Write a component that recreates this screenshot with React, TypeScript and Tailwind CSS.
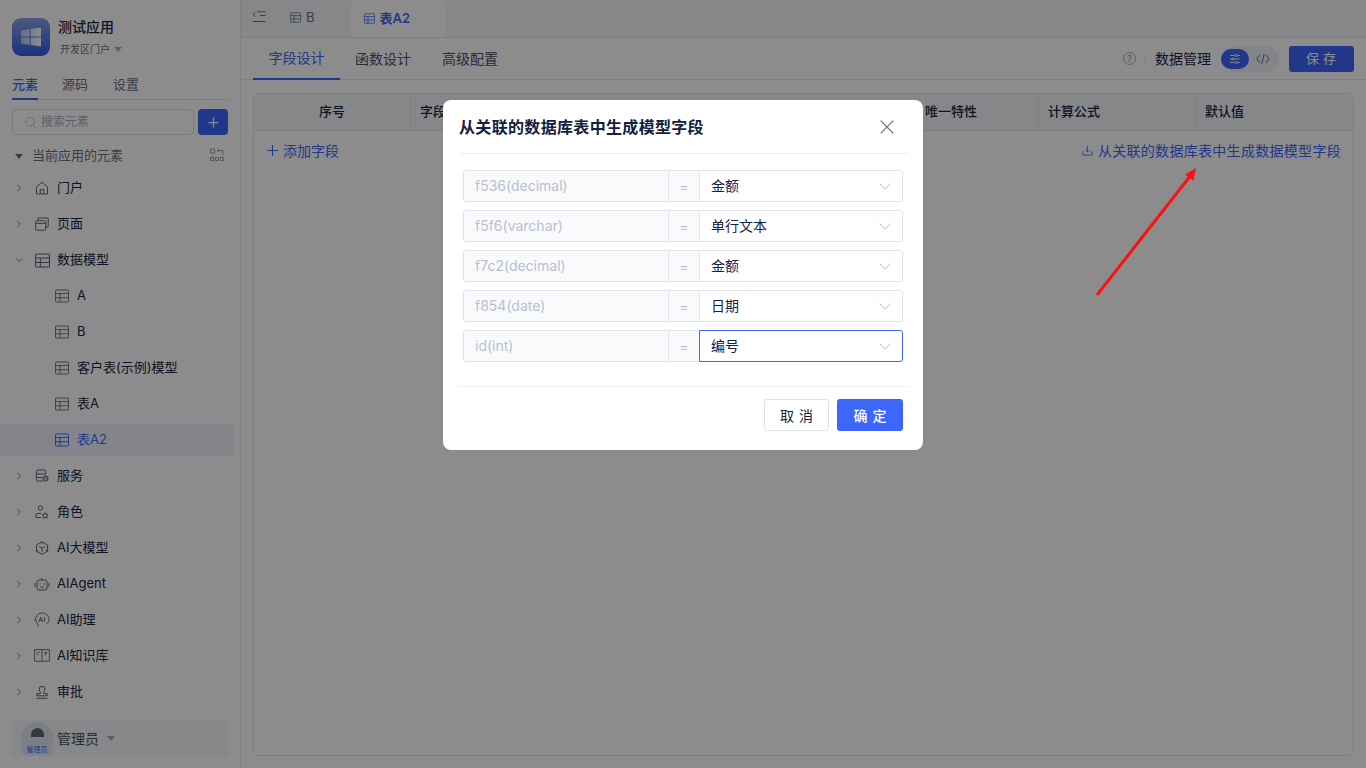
import { ChevronDown, ChevronRight, Plus, Search } from "lucide-react";
import type { ReactNode } from "react";

const FONT = "font-['Inter','Noto_Sans_CJK_SC',sans-serif]";

function TableIcon({ className = "size-[14px]" }: { className?: string }) {
  return (
    <svg viewBox="0 0 14 14" fill="none" stroke="currentColor" strokeWidth="1" className={className}>
      <rect x="0.5" y="1" width="13" height="12" rx="1" />
      <path d="M0.5 4.6H13.5M0.5 8.8H13.5M5 4.6V13" />
    </svg>
  );
}

function HomeIcon() {
  return (
    <svg viewBox="0 0 14 14" fill="none" stroke="currentColor" className="size-[14px]">
      <path d="M1.5 5.8 7 1.2l5.5 4.6v7.2h-11zM5.2 13V8.6h3.6V13" />
    </svg>
  );
}

function PageIcon() {
  return (
    <svg viewBox="0 0 14 14" fill="none" stroke="currentColor" className="size-[14px]">
      <rect x="0.7" y="3.7" width="10" height="9.5" rx="1" />
      <path d="M0.7 6.4h10M3.2 3.5V1h10v9h-2.4" />
    </svg>
  );
}

function ServiceIcon() {
  return (
    <svg viewBox="0 0 14 14" fill="none" stroke="currentColor" className="size-[14px]">
      <path d="M8 12H3a1.6 1.6 0 0 1-1.6-1.6V2.6A1.6 1.6 0 0 1 3 1h6a1.6 1.6 0 0 1 1.6 1.6V5M1.4 5h9M1.4 8.5H7" />
      <circle cx="10.5" cy="9.5" r="2.6" fill="currentColor" fillOpacity="0.4" />
    </svg>
  );
}

function RoleIcon() {
  return (
    <svg viewBox="0 0 14 14" fill="none" stroke="currentColor" className="size-[14px]">
      <circle cx="5.4" cy="3.2" r="2.2" />
      <path d="M1 12.5V10.4a2 2 0 0 1 2-2h3.4M1 12.5h5M10.2 7.6l1 1.9 2 .3-1.5 1.4.4 2-1.9-1-1.9 1 .4-2-1.5-1.4 2-.3z" />
    </svg>
  );
}

function CubeIcon() {
  return (
    <svg viewBox="0 0 14 14" fill="none" stroke="currentColor" className="size-[14px]">
      <path d="M7 .8 12.6 4v6.2L7 13.3 1.4 10.2V4zM4 5.4 7 7.1l3-1.7M7 7.1v3.6M7 .8v2M1.4 10.2l1.8-1M12.6 10.2l-1.8-1" />
    </svg>
  );
}

function RobotIcon() {
  return (
    <svg viewBox="0 0 16 14" fill="none" stroke="currentColor" className="h-[14px] w-4">
      <rect x="3" y="3" width="10" height="10" rx="2" />
      <path d="M8 3V1M1 6v4M15 6v4M6 6.3v1.4M10 6.3v1.4M6 10h4" />
    </svg>
  );
}

function AssistantIcon() {
  return (
    <svg viewBox="0 0 16 16" fill="none" stroke="currentColor" strokeWidth="0.9" className="size-4">
      <path d="M4 14.6v-2.2C2.8 11.6 2 10 2 8l-1.2 0L2.4 5C3 2.6 5.2 1 8 1c3.8 0 7 2.6 7 6.4 0 2-1 3.6-2.6 4.8" />
      <path d="M5 10 6.8 5 8.6 10M5.6 8.4h2.4M10.4 5v5" />
    </svg>
  );
}

function BookIcon() {
  return (
    <svg viewBox="0 0 16 14" fill="none" stroke="currentColor" strokeWidth="0.9" className="h-[14px] w-4">
      <path d="M.6.6h14.8v11.6H9L8 13.2l-1-1H.6zM8 .6v11.6M2.6 3.4h3M2.6 5.6h1.6M10.2 3.4h3M11.6 3.4v3" />
    </svg>
  );
}

function StampIcon() {
  return (
    <svg viewBox="0 0 14 14" fill="none" stroke="currentColor" className="size-[14px]">
      <path d="M1.5 13.3h11M1.8 10.8V8.6h3.6V7.4C4.6 6.6 4.2 5.6 4.2 4.3A2.8 2.8 0 0 1 7 1.4a2.8 2.8 0 0 1 2.8 2.9c0 1.3-.4 2.3-1.2 3.1v1.2h3.6v2.2z" />
    </svg>
  );
}

function Caret({ className }: { className: string }) {
  return <span className={`inline-block border-x-[4.5px] border-t-[5px] border-x-transparent ${className}`} />;
}

function SelectArrow() {
  return (
    <svg viewBox="0 0 12 7" fill="none" stroke="#b9c0d0" className="h-[7px] w-[12px]">
      <path d="M.6.6 6 6.2 11.4.6" />
    </svg>
  );
}

type TreeRow = { label: string; icon: ReactNode; open?: boolean };

const topRows: TreeRow[] = [
  { label: "门户", icon: <HomeIcon /> },
  { label: "页面", icon: <PageIcon /> },
  { label: "数据模型", icon: <TableIcon className="size-[15px]" />, open: true },
];

const bottomRows: TreeRow[] = [
  { label: "服务", icon: <ServiceIcon /> },
  { label: "角色", icon: <RoleIcon /> },
  { label: "AI大模型", icon: <CubeIcon /> },
  { label: "AIAgent", icon: <RobotIcon /> },
  { label: "AI助理", icon: <AssistantIcon /> },
  { label: "AI知识库", icon: <BookIcon /> },
  { label: "审批", icon: <StampIcon /> },
];

const models = ["A", "B", "客户表(示例)模型", "表A", "表A2"];

const fieldRows = [
  { field: "f536(decimal)", value: "金额" },
  { field: "f5f6(varchar)", value: "单行文本" },
  { field: "f7c2(decimal)", value: "金额" },
  { field: "f854(date)", value: "日期" },
  { field: "id(int)", value: "编号", active: true },
];

function Row({ row }: { row: TreeRow }) {
  return (
    <div className="flex h-9 items-center pl-[13px] text-[13px] text-[#1a2542]">
      {row.open ? (
        <ChevronDown size={12} className="shrink-0 text-[#7f8696]" />
      ) : (
        <ChevronRight size={12} className="shrink-0 text-[#7f8696]" />
      )}
      <span className="ml-[6px] flex w-[22px] shrink-0 justify-center text-[#5c6579]">{row.icon}</span>
      <span className="ml-[4px]">{row.label}</span>
    </div>
  );
}

function Sidebar() {
  return (
    <aside className="flex w-[241px] shrink-0 flex-col border-r border-[#e6e8ee] bg-white">
      <div className="flex items-center px-3 pt-[18px]">
        <div className="flex size-[38px] items-center justify-center rounded-[9px] bg-gradient-to-b from-[#8ba2e6] to-[#3059e6]">
          <svg viewBox="0 0 20 20" className="size-[20px]">
            <defs>
              <linearGradient id="winFill" x1="0" x2="1" y1="0" y2="0">
                <stop offset="0" stopColor="#ffffff" stopOpacity="0.55" />
                <stop offset="1" stopColor="#ffffff" />
              </linearGradient>
            </defs>
            <path
              fill="url(#winFill)"
              d="M0 3.4 8.6 2.2v7.2H0zM9.6 2 20 .5v8.9H9.6zM0 10.4h8.6v7.4L0 16.6zM9.6 10.4H20v9.1L9.6 18z"
            />
          </svg>
        </div>
        <div className="ml-[8px]">
          <div className="text-[14px] leading-[17px] font-medium text-[#1a2542]">测试应用</div>
          <div className="mt-[7px] ml-[2px] flex items-center gap-[4px] text-[10px] leading-[14px] text-[#667085]">
            开发区门户
            <Caret className="border-t-[#a8aebb]" />
          </div>
        </div>
      </div>

      <div className="mx-3 mt-[18px] flex h-[26px] gap-[24px] border-b border-[#e6e8ee] text-[13px] leading-[20px] text-[#667085]">
        <span className="h-[26px] border-b-2 border-[#3d66fb] font-medium text-[#3d66fb]">元素</span>
        <span>源码</span>
        <span className="ml-[1px]">设置</span>
      </div>

      <div className="mx-3 mt-[9px] flex gap-[4px]">
        <div className="flex h-[26px] flex-1 items-center rounded-[4px] border border-[#dde0e8] pl-[11px] text-[12px] text-[#a9afbd]">
          <Search size={13} strokeWidth={1.2} />
          <span className="ml-[4px]">搜索元素</span>
        </div>
        <div className="flex h-[26px] w-[30px] items-center justify-center rounded-[4px] bg-[#3d66fb] text-white">
          <Plus size={15} strokeWidth={2} />
        </div>
      </div>

      <div className="mt-[11px] flex h-[20px] items-center pr-[16px] pl-[15px] text-[13px] text-[#667085]">
        <Caret className="border-t-[#667085]" />
        <span className="ml-[9px] flex-1">当前应用的元素</span>
        <svg viewBox="0 0 14 14" fill="none" stroke="#8a92a3" strokeWidth="0.9" className="mb-[2px] size-[14px]">
          <path d="M.6 1h4v4h-4zM.6 9.5h3v3h-3zM5.5 9.5h3v3h-3zM10.4 9.5h3v3h-3zM8 2.5h5v4.5M8 1v3" />
        </svg>
      </div>

      <div className="mt-[4px]">
        {topRows.map((row) => (
          <Row key={row.label} row={row} />
        ))}
        {models.map((name) => {
          const selected = name === "表A2";
          return (
            <div key={name} className="h-9 py-[2px] pr-[6px]">
              <div
                className={`flex h-8 items-center pl-[55px] text-[13px] ${
                  selected ? "bg-[#f0f3fe] text-[#3d66fb]" : "text-[#1a2542]"
                }`}
              >
                <span className={selected ? "text-[#3d66fb]" : "text-[#6f7789]"}>
                  <TableIcon />
                </span>
                <span className="ml-2">{name}</span>
              </div>
            </div>
          );
        })}
        {bottomRows.map((row) => (
          <Row key={row.label} row={row} />
        ))}
      </div>

      <div className="mx-3 mt-auto mb-[11px] flex h-[38px] items-center rounded-[4px] bg-[#f6f7f9] pl-[9px] text-[14px] text-[#475069]">
        <div className="relative size-[32px] rounded-full bg-[#e3e6ec]">
          <span className="absolute top-[6px] left-[10px] h-[9px] w-[13px] rounded-t-full bg-[#5f6677]" />
          <span className="absolute bottom-[-1px] left-0 h-[10px] w-[32px] rounded-full bg-[#dfe6fb] text-center text-[7px] leading-[10px] text-[#3d66fb]">
            管理员
          </span>
        </div>
        <span className="ml-[4px]">管理员</span>
        <Caret className="ml-[8px] border-t-[#a8aebb]" />
      </div>
    </aside>
  );
}

function Main() {
  const heads = ["序号", "字段", "", "", "唯一特性", "计算公式", "默认值"];
  return (
    <main className="flex min-w-0 flex-1 flex-col bg-white">
      <div className="flex h-[38px] items-end border-b border-[#e6e8ee] bg-[#f5f6fa] text-[13px]">
        <svg viewBox="0 0 14 12" fill="none" stroke="#667085" className="mb-[14px] ml-[11px] h-[12px] w-[14px]">
          <path d="M5 .8h8.5M8 4.5h5.5M.5 10.5h13M3.4 1.5 1 3.5l2.4 2" />
        </svg>
        <div className="mb-[10px] ml-[24px] flex items-center gap-[5px] text-[#667085]">
          <TableIcon className="size-[11px]" />B
        </div>
        <div className="ml-[36px] flex h-[37px] w-[95px] items-center gap-[5px] rounded-t-[5px] bg-white pl-[13px] font-semibold text-[#3d66fb]">
          <TableIcon className="size-[11px]" />
          表A2
        </div>
      </div>

      <div className="flex h-[42px] items-center border-b border-[#e6e8ee] pr-3 pl-[12px] text-[14px] text-[#475069]">
        <span className="flex h-[42px] w-[87px] items-center justify-center border-b-2 border-[#3d66fb] text-[#3d66fb]">字段设计</span>
        <span className="ml-[15px]">函数设计</span>
        <span className="ml-[31px]">高级配置</span>
        <div className="ml-auto flex items-center">
          <span className="flex size-[13px] items-center justify-center rounded-full border border-[#a8aebb] text-[9px] text-[#8a92a3]">?</span>
          <span className="mx-[9px] h-[12px] w-px bg-[#e6e8ee]" />
          <span className="text-[14px] text-[#1a2542]">数据管理</span>
          <div className="ml-[10px] flex h-[26px] w-[58px] items-center rounded-full bg-[#f1f3f7]">
            <span className="flex h-[20px] w-[28px] items-center justify-center rounded-full bg-[#3d66fb]">
              <svg viewBox="0 0 12 12" fill="none" stroke="#ffffff" strokeWidth="0.9" className="size-[12px]">
                <path d="M1 2.5h10M1 6h10M1 9.5h10" />
                <circle cx="7.5" cy="2.5" r="1.1" fill="#3d66fb" />
                <circle cx="4" cy="6" r="1.1" fill="#3d66fb" />
                <circle cx="7.5" cy="9.5" r="1.1" fill="#3d66fb" />
              </svg>
            </span>
            <svg viewBox="0 0 14 12" fill="none" stroke="#667085" className="ml-[7px] h-[12px] w-[14px]">
              <path d="M4 2 .9 6 4 10M10 2l3.1 4L10 10M8.2 1 5.8 11" />
            </svg>
          </div>
          <button className="ml-[10px] h-[26px] w-[65px] rounded-[3px] bg-[#3d66fb] indent-[3px] text-[13px] tracking-[4px] text-white">保存</button>
        </div>
      </div>

      <div className="mx-3 mt-[13px] mb-3 flex flex-1 flex-col rounded-[5px] border border-[#e6e8ee]">
        <div className="grid h-[37px] grid-cols-7 border-b border-[#e6e8ee] bg-[#f5f6fa] text-[13px] font-medium text-[#1a2542]">
          {heads.map((head, i) => (
            <div
              key={i}
              className={`flex items-center border-[#e6e8ee] ${i < 6 ? "border-r" : ""} ${
                i === 0 ? "justify-center" : i === 4 ? "pl-[43px]" : "pl-[9px]"
              }`}
            >
              {head}
            </div>
          ))}
        </div>
        <div className="flex h-[39px] items-center justify-between pr-[12px] pl-[10px] text-[14px] text-[#3d66fb]">
          <span className="flex items-center gap-[2px]">
            <Plus size={17} strokeWidth={1.6} />
            添加字段
          </span>
          <span className="flex items-center gap-[5px] tracking-[0.3px]">
            <svg viewBox="0 0 12 12" fill="none" stroke="currentColor" strokeWidth="0.9" className="size-[11px]">
              <path d="M6 1v6.5M3.6 5.2 6 7.6l2.4-2.4M1 6.5V11h10V6.5" />
            </svg>
            从关联的数据库表中生成数据模型字段
          </span>
        </div>
      </div>
    </main>
  );
}

function Modal() {
  return (
    <div className="absolute top-[100px] left-[443px] w-[480px] rounded-[8px] bg-white px-4">
      <div className="flex h-[54px] items-center justify-between border-b border-[#eceef3]">
        <span className="text-[16px] font-semibold tracking-[0.33px] text-[#14213f]">从关联的数据库表中生成模型字段</span>
        <svg viewBox="0 0 14 14" fill="none" stroke="#66708a" strokeWidth="1.2" className="mr-[13px] size-[14px]">
          <path d="M.7.7l12.6 12.6M13.3.7.7 13.3" />
        </svg>
      </div>
      <div className="flex flex-col gap-2 px-1 pt-4 pb-6">
        {fieldRows.map((row) => (
          <div key={row.field} className="flex h-[32px] text-[14px]">
            <div className="flex w-[206px] items-center rounded-l-[3px] border border-[#dfe3ec] bg-[#f9fafc] pb-[2px] pl-[11px] text-[#b9c0d0]">
              {row.field}
            </div>
            <div className="flex w-[30px] items-center justify-center border-y border-[#dfe3ec] bg-[#f9fafc] text-[#b9c0d0]">
              =
            </div>
            <div
              className={`flex flex-1 items-center justify-between rounded-r-[3px] border pr-[11px] pl-[11px] text-[14px] text-[#14213f] ${
                row.active ? "border-[#3d66fb]" : "border-[#dfe3ec]"
              }`}
            >
              <span className="mb-[2px]">{row.value}</span>
              <SelectArrow />
            </div>
          </div>
        ))}
      </div>
      <div className="flex items-start justify-end gap-2 border-t border-[#eceef3] pt-3 pr-1 pb-[19px]">
        <button className="h-[32px] w-[65px] rounded-[3px] border border-[#dfe3ec] bg-white indent-[5px] text-[14px] tracking-[5px] text-[#14213f]">取消</button>
        <button className="h-[32px] w-[66px] rounded-[3px] bg-[#3d66fb] indent-[5px] text-[14px] font-medium tracking-[5px] text-white">确定</button>
      </div>
    </div>
  );
}

export default function App() {
  return (
    <div className={`relative flex h-[768px] w-[1366px] overflow-hidden ${FONT}`}>
      <Sidebar />
      <Main />
      <div className="absolute inset-0 bg-black/45" />
      <Modal />
      <svg viewBox="0 0 1366 768" fill="none" className="pointer-events-none absolute inset-0 h-[768px] w-[1366px]">
        <path d="M1097 295 1191 175" stroke="#fa1111" strokeWidth="3" />
        <path d="M1196 168 1193.5 181 1185 174.5z" fill="#fa1111" />
      </svg>
    </div>
  );
}
